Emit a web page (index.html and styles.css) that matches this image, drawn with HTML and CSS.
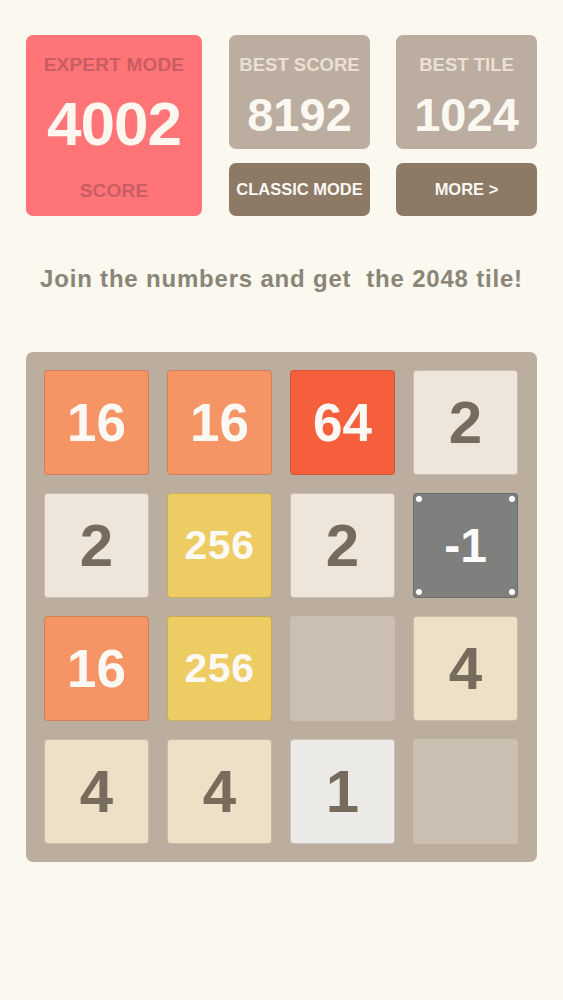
FILE: index.html
```html
<!DOCTYPE html>
<html>
<head>
<meta charset="utf-8">
<link rel="stylesheet" href="styles.css">
</head>
<body>
<div class="page">
  <div class="top">
    <div class="expert">
      <div class="expert-label">EXPERT MODE</div>
      <div class="expert-score">4002</div>
      <div class="expert-label">SCORE</div>
    </div>
    <div class="col">
      <div class="stat">
        <div class="stat-label">BEST SCORE</div>
        <div class="stat-value">8192</div>
      </div>
      <div class="btn">CLASSIC MODE</div>
    </div>
    <div class="col">
      <div class="stat">
        <div class="stat-label">BEST TILE</div>
        <div class="stat-value">1024</div>
      </div>
      <div class="btn">MORE &gt;</div>
    </div>
  </div>
  <div class="tagline">Join the numbers and get&nbsp; the 2048 tile!</div>
  <div class="board">
    <div class="tile t16 n2">16</div>
    <div class="tile t16 n2">16</div>
    <div class="tile t64 n2">64</div>
    <div class="tile t2 n1">2</div>

    <div class="tile t2 n1">2</div>
    <div class="tile t256 n3">256</div>
    <div class="tile t2 n1">2</div>
    <div class="tile tneg">-1<span class="dot d1"></span><span class="dot d2"></span><span class="dot d3"></span><span class="dot d4"></span></div>

    <div class="tile t16 n2">16</div>
    <div class="tile t256 n3">256</div>
    <div class="cell"></div>
    <div class="tile t4 n1">4</div>

    <div class="tile t4 n1">4</div>
    <div class="tile t4 n1">4</div>
    <div class="tile t1 n1">1</div>
    <div class="cell"></div>
  </div>
</div>
</body>
</html>
```
FILE: styles.css
```css
html, body {
  margin: 0;
  padding: 0;
  background: #fbf8ef;
  font-family: "Liberation Sans", Arial, sans-serif;
  font-weight: bold;
}
.page {
  padding: 35px 26px 0 26px;
  width: 511px;
}
.top {
  display: flex;
  height: 181px;
}
.expert {
  width: 176px;
  height: 181px;
  background: #ff7477;
  border-radius: 7px;
  display: flex;
  flex-direction: column;
  align-items: center;
  box-sizing: border-box;
  padding-top: 19px;
}
.expert-label {
  font-size: 19px;
  color: #c95d63;
  line-height: 22px;
  letter-spacing: 0.2px;
}
.expert-score {
  font-size: 62px;
  color: #fdf7ef;
  line-height: 64px;
  margin-top: 16px;
  margin-bottom: 24px;
  letter-spacing: -1px;
}
.col {
  width: 141px;
  display: flex;
  flex-direction: column;
  gap: 14px;
  margin-left: 27px;
}
.col + .col {
  margin-left: 26px;
}
.stat {
  height: 114px;
  background: #bbad9f;
  border-radius: 7px;
  display: flex;
  flex-direction: column;
  align-items: center;
  box-sizing: border-box;
  padding-top: 19px;
}
.stat-label {
  font-size: 18.5px;
  line-height: 22px;
  color: #ebe0d3;
}
.stat-value {
  font-size: 47px;
  line-height: 50px;
  color: #fbf7f1;
  margin-top: 14px;
}
.btn {
  height: 53px;
  background: #8c7a67;
  border-radius: 7px;
  color: #fbf7f1;
  font-size: 16.5px;
  display: flex;
  align-items: center;
  justify-content: center;
}
.tagline {
  text-align: center;
  font-size: 24px;
  letter-spacing: 0.8px;
  color: #8a8577;
  margin-top: 49px;
  line-height: 28px;
  white-space: nowrap;
}
.board {
  margin-top: 59px;
  width: 511px;
  height: 510px;
  box-sizing: border-box;
  padding: 18px;
  background: #bbae9f;
  border-radius: 7px;
  display: grid;
  grid-template-columns: repeat(4, 105px);
  grid-template-rows: repeat(4, 105px);
  column-gap: 18px;
  row-gap: 18px;
}
.tile {
  position: relative;
  border-radius: 4px;
  border: 1px solid rgba(80, 60, 40, 0.22);
  box-sizing: border-box;
  display: flex;
  align-items: center;
  justify-content: center;
  font-size: 48px;
  color: #766b5c;
}
.n1 { font-size: 60px; }
.n2 { font-size: 53px; }
.n3 { font-size: 41px; letter-spacing: 0.5px; }
.cell {
  border-radius: 4px;
  background: #cbbfb2;
}
.t2 { background: #eee5db; }
.t4 { background: #ece0c6; }
.t1 { background: #eceae7; }
.t16 { background: #f59464; color: #fcf8f3; }
.t64 { background: #f65f3b; color: #fcf8f3; }
.t256 { background: #eccc63; color: #fcf8f3; }
.tneg { background: #7f7f7d; color: #fcfcfc; border-color: rgba(60,60,60,0.3); font-size: 48px; }
.dot {
  position: absolute;
  width: 6px;
  height: 6px;
  border-radius: 50%;
  background: #ffffff;
}
.d1 { top: 2px; left: 2px; }
.d2 { top: 2px; right: 2px; }
.d3 { bottom: 2px; left: 2px; }
.d4 { bottom: 2px; right: 2px; }
```
